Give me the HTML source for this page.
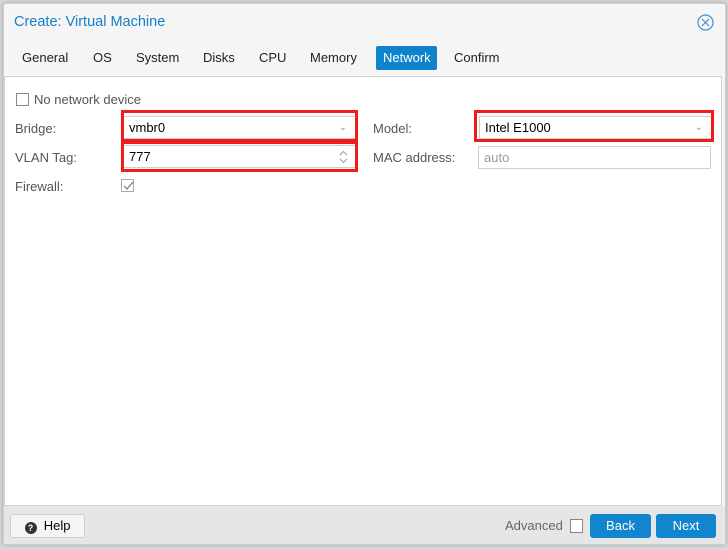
<!DOCTYPE html>
<html><head><meta charset="utf-8"><style>
*{box-sizing:border-box;margin:0;padding:0}
body{width:728px;height:550px;overflow:hidden;background:#d8d8d8;font-family:"Liberation Sans",Helvetica,sans-serif;font-size:13px;color:#000;position:relative}
.dlg{position:absolute;left:3px;top:3px;width:723px;height:542px;background:#f5f5f5;border:1px solid #cfcfcf;border-radius:3px;box-shadow:0 0 4px rgba(0,0,0,.25)}
.title{position:absolute;left:10px;top:10px;font-size:14.5px;color:#157fcc}
.close{position:absolute;left:693px;top:10px}
.tab{position:absolute;top:42px;height:24px;line-height:24px;padding:0 7px;color:#222}
.tab.act{background:#0f83cc;color:#fff;border-radius:2px}
.body{position:absolute;left:0;top:72px;width:718px;height:430px;background:#fff;border:1px solid #cfcfcf}
.lbl{position:absolute;color:#555}
.fld{position:absolute;background:#fff;border:1px solid #cfcfcf;height:23px;line-height:21px;padding-left:5px}
.red{position:absolute;border:3px solid #f21b1b}
.cb{position:absolute;width:13px;height:13px;border:1px solid #888;background:#fff}
.foot{position:absolute;left:0;top:502px;width:721px;height:38px;background:#e6e6e6}
.btn{position:absolute;height:24px;line-height:24px;border-radius:3px;text-align:center}
</style></head><body>
<div class="dlg">
<div class="title">Create: Virtual Machine</div>
<svg class="close" width="17" height="17" viewBox="0 0 17 17"><circle cx="8.5" cy="8.5" r="7.5" fill="none" stroke="#3f8fd0" stroke-width="1.2"/><path d="M5 5L12 12M12 5L5 12" stroke="#3f8fd0" stroke-width="1.2"/></svg>
<div class="tab" style="left:11px">General</div>
<div class="tab" style="left:82px">OS</div>
<div class="tab" style="left:125px">System</div>
<div class="tab" style="left:192px">Disks</div>
<div class="tab" style="left:248px">CPU</div>
<div class="tab" style="left:299px">Memory</div>
<div class="tab act" style="left:372px;width:61px">Network</div>
<div class="tab" style="left:443px">Confirm</div>
<div class="body">
<div class="cb" style="left:11px;top:16px"></div>
<div class="lbl" style="left:29px;top:15px">No network device</div>
<div class="lbl" style="left:10px;top:44px">Bridge:</div>
<div class="lbl" style="left:10px;top:73px">VLAN Tag:</div>
<div class="lbl" style="left:10px;top:102px">Firewall:</div>
<div class="fld" style="left:118px;top:39px;width:233px">vmbr0<span style="position:absolute;right:8px;color:#999;font-size:10px">&#8964;</span></div>
<div class="fld" style="left:118px;top:68px;width:233px">777<svg style="position:absolute;right:7px;top:4px" width="9" height="14"><path d="M1 5L4.5 1.5L8 5M1 9L4.5 12.5L8 9" fill="none" stroke="#999"/></svg></div>
<div class="red" style="left:116px;top:33px;width:237px;height:32px"></div>
<div class="red" style="left:116px;top:64px;width:237px;height:31px"></div>
<div class="cb" style="left:116px;top:102px;border-color:#aaa"></div>
<svg style="position:absolute;left:117px;top:102px" width="13" height="13"><path d="M2 7L5 10L11 3" fill="none" stroke="#777" stroke-width="1.2"/></svg>
<div class="lbl" style="left:368px;top:44px">Model:</div>
<div class="lbl" style="left:368px;top:73px">MAC address:</div>
<div class="fld" style="left:474px;top:39px;width:233px">Intel E1000<span style="position:absolute;right:8px;color:#999;font-size:10px">&#8964;</span></div>
<div class="red" style="left:469px;top:33px;width:240px;height:32px"></div>
<div class="fld" style="left:473px;top:69px;width:233px;color:#999">auto</div>
</div>
<div class="foot">
<div class="btn" style="left:6px;top:8px;width:75px;background:#f5f5f5;border:1px solid #d0d0d0;line-height:22px"><span style="display:inline-block;width:12px;height:12px;border-radius:50%;background:#333;color:#fff;font-size:9px;line-height:12px;font-weight:bold;vertical-align:-1px">?</span>&nbsp; Help</div>
<div style="position:absolute;left:501px;top:12px;color:#666">Advanced</div>
<div class="cb" style="left:566px;top:13px;width:13px;height:14px"></div>
<div class="btn" style="left:586px;top:8px;width:61px;background:#1285cf;color:#fff">Back</div>
<div class="btn" style="left:652px;top:8px;width:60px;background:#1285cf;color:#fff">Next</div>
</div>
</div>
</body></html>
